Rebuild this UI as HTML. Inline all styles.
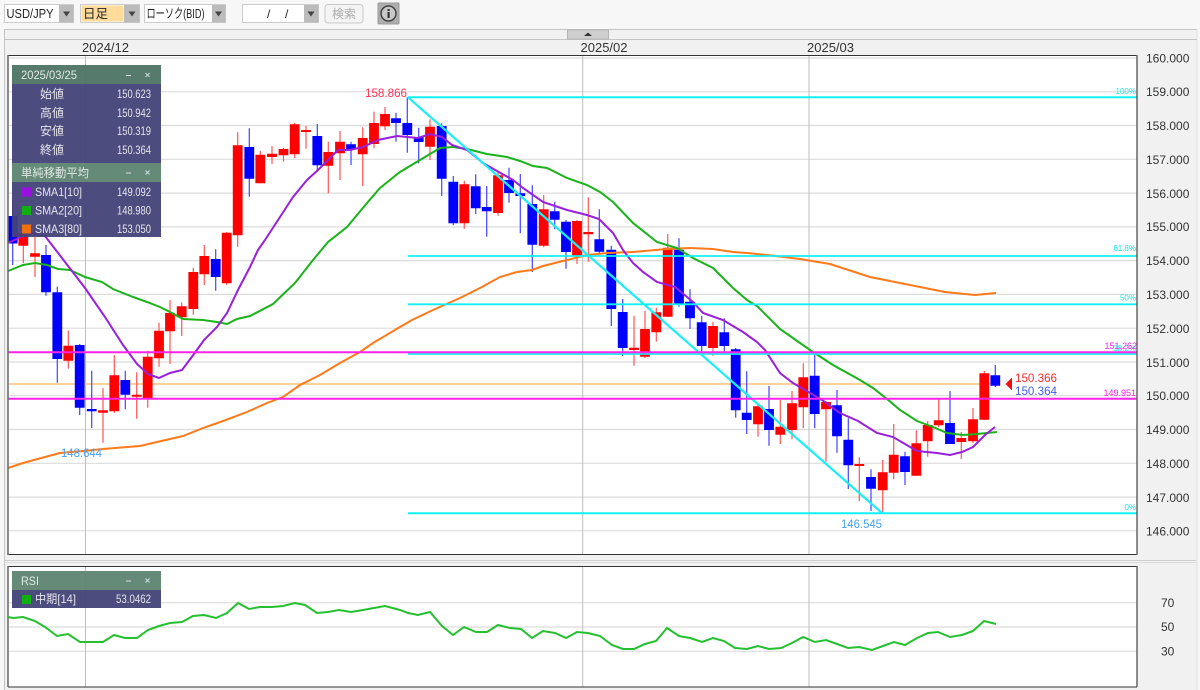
<!DOCTYPE html>
<html lang="ja"><head><meta charset="utf-8"><title>USD/JPY</title>
<style>
html,body{margin:0;padding:0;background:#f7f7f7;width:1200px;height:690px;overflow:hidden}
svg{display:block;filter:blur(.3px)}
text{font-family:"Liberation Sans","Noto Sans CJK JP",sans-serif;font-size:12px}
.ax{fill:#333}
.p{fill:#e4e4ea;font-size:12px}
.r{fill:#e4e4ea;font-size:12px;text-anchor:end}
.h{fill:#e0e8e4;font-size:12px}
.f{font-size:8px;text-anchor:end}
</style></head><body>
<svg width="1200" height="690" viewBox="0 0 1200 690" xmlns="http://www.w3.org/2000/svg">
<rect width="1200" height="690" fill="#f7f7f7"/>
<!-- outer frame -->
<rect x="4" y="29" width="1193" height="661" fill="#f1f1f1"/>
<path d="M4.500 690V29.500H1197" fill="none" stroke="#c4c4c4"/>
<path d="M1197 29V690" stroke="#e2e2e2"/>
<path d="M4 39.500H1197" stroke="#c4c4c4"/>
<rect x="567.500" y="30" width="41" height="9" fill="#cfcfcf" stroke="#b4b4b4"/>
<path d="M584 36H592L588 32.500Z" fill="#333"/>
<!-- separator -->
<rect x="5" y="560" width="1191" height="1" fill="#cfcfcf"/>
<rect x="5" y="562" width="1191" height="1" fill="#dcdcdc"/>
<!-- toolbar -->
<g>
<rect x="4.500" y="4.500" width="69" height="18" fill="#fff" stroke="#ccc"/>
<rect x="59" y="5" width="14.500" height="17.500" fill="#bbb"/>
<path d="M63 11.500H70L66.500 16.500Z" fill="#444"/>
<text x="6.500" y="18" fill="#222" textLength="47" lengthAdjust="spacingAndGlyphs" style="font-size:13px">USD/JPY</text>
<rect x="80.500" y="4.500" width="59" height="18" fill="#fff" stroke="#ccc"/>
<rect x="81.500" y="5.500" width="42" height="16" fill="#ffdc9a"/>
<rect x="124" y="5" width="15.500" height="17.500" fill="#bbb"/>
<path d="M128.500 11.500H135.500L132 16.500Z" fill="#444"/>
<text x="83" y="18" fill="#222" style="font-size:12.500px">日足</text>
<rect x="144.500" y="4.500" width="81" height="18" fill="#fff" stroke="#ccc"/>
<rect x="212" y="5" width="13.500" height="17.500" fill="#bbb"/>
<path d="M215 11.500H222L218.500 16.500Z" fill="#444"/>
<text x="146.500" y="18" fill="#222" textLength="58" lengthAdjust="spacingAndGlyphs" style="font-size:13px">ローソク(BID)</text>
<rect x="242.500" y="4.500" width="76" height="18" fill="#fff" stroke="#ccc"/>
<rect x="304" y="5" width="14.500" height="17.500" fill="#bbb"/>
<path d="M307.500 11.500H314.500L311 16.500Z" fill="#444"/>
<text x="267" y="18" fill="#222">/</text><text x="285" y="18" fill="#222">/</text>
<rect x="325" y="4.500" width="38" height="18.500" rx="3" fill="#f4f4f4" stroke="#c8c8c8"/>
<text x="332" y="18" fill="#aaa">検索</text>
<rect x="378" y="3" width="21" height="21" rx="1" fill="#aeaeae" stroke="#999"/>
<circle cx="388.500" cy="13.500" r="7.500" fill="#c8c8c8" stroke="#444" stroke-width="1.500"/>
<rect x="387.500" y="12" width="2.200" height="6" fill="#333"/><rect x="387.500" y="9" width="2.200" height="2" fill="#333"/>
</g>
<!-- date labels -->
<text x="82" y="52" class="ax" textLength="47" lengthAdjust="spacingAndGlyphs" style="font-size:13px">2024/12</text>
<text x="580.500" y="52" class="ax" textLength="47" lengthAdjust="spacingAndGlyphs" style="font-size:13px">2025/02</text>
<text x="807" y="52" class="ax" textLength="47" lengthAdjust="spacingAndGlyphs" style="font-size:13px">2025/03</text>
<!-- chart bg -->
<rect x="8" y="55" width="1129" height="500" fill="#fff"/>
<rect x="8" y="566" width="1129" height="121" fill="#fff"/>
<!-- grid -->
<path d="M8 58H1137M8 91.800H1137M8 125.500H1137M8 159.300H1137M8 193.100H1137M8 226.900H1137M8 260.600H1137M8 294.400H1137M8 328.200H1137M8 362H1137M8 395.700H1137M8 429.500H1137M8 463.300H1137M8 497.100H1137M8 530.800H1137" stroke="#dcdcdc" stroke-width="1.200" fill="none"/>
<path d="M8 602.700H1137M8 627H1137M8 651.300H1137" stroke="#dcdcdc" stroke-width="1.200" fill="none"/>
<path d="M85.500 55V555M582.700 55V555M809 55V555M85.500 566V687M582.700 566V687M809 566V687" stroke="#bdbdbd" fill="none"/>
<path d="M8 384H990" stroke="#fbc078" stroke-width="1.500"/>
<!-- wicks -->
<path fill="none" stroke="#f55" stroke-width="1.200" d="M23.300 228V263M35 235V277M68.300 330.700V368.700M103 388.300V442.700M114.300 355V413M136.700 372.300V418.700M147.700 350.700V407.700M159 322.700V366.700M170 300V364M181.700 302.300V336M193.300 267.700V314.700M204.300 245V285M226.700 232V285M237.700 132.300V246.700M260.300 151V183.300M272 146V164M283.500 148V161.700M294.700 122.700V158M306 126V148.700M328.300 141.700V193.300M340 131V180M362.700 127.300V186M374 111.700V148.300M385 107V130M430 119.300V160M464.300 180.700V228.700M498 171.700V215.700M543.700 195V247.300M577 220V264M588.300 197.300V261.700M634 315.700V365.700M645 310.700V358M656.300 307.700V341.700M667.700 234V317M713 321.700V355.700M758 403.300V436.700M780.300 400V444M792 391V439.300M803.300 363.300V428.300M826 401V461.700M859.300 457.300V501.300M882.700 460V512M893.700 424V479.300M916.300 430.300V476M927.700 421V456.700M938.700 399.300V427M961.300 432V459M973 408V443M984.300 370.700V420"/>
<path fill="none" stroke="#44f" stroke-width="1.200" d="M12.700 200V265M46 245V295.700M57.300 286.700V382.700M79.700 344V415M91.700 370.700V428M125.300 370.700V409.300M215.700 249.300V290.700M249.300 128.300V196.700M317.300 124V171.700M351 141.700V165M396 112.700V141.700M407.300 97.300V152.700M418.700 127.700V163.300M441.700 123.300V196M453.300 176V225.300M475.700 174.300V214M486.700 186V236.700M509 167.700V202.700M520.300 174V233.300M532.300 185.300V272M554.700 201.700V229.300M566 220V268.700M599.300 209.300V254.300M611.300 245.700V326M622.700 299V356M679 238.300V306.700M690 289.300V329M701.700 315.700V353.300M724.300 318.300V353.300M735.700 348V417.700M746.700 371.300V434M769 386V445.700M814.700 353.300V428.300M837 390V452.700M848.300 418.300V489M871 469.300V511M905 451.700V485M950 391V444M995.300 365V387"/>
<!-- bodies -->
<path fill="none" stroke="#f00" stroke-width="9.800" d="M23.300 233V245.700M35 253.300V256.700M68.300 345.700V360.700M103 410.300V412.700M114.300 375.300V411.300M136.700 394.700V396.700M147.700 356.700V398.300M159 330.700V358.300M170 313V331.300M181.700 306.300V317.300M193.300 272V309M204.300 256V274.300M226.700 232.700V283.300M237.700 145.300V235.300M260.300 154.700V183.300M272 153.700V157M283.500 149V155.300M294.700 124.300V154.300M306 130V132M328.300 152V165.700M340 141.700V153.300M362.700 138V154.300M374 123V144M385 114V126.300M430 126.700V146.700M464.300 184.300V223.300M498 175.300V213M543.700 209.300V245.700M577 221V256M588.300 232V234.300M634 347.700V350M645 329V356.700M656.300 312.300V332.300M667.700 247.700V316.700M713 326V348M758 406.300V424.300M780.300 426.700V434.700M792 403.300V430M803.300 377.300V407.300M826 402V409.300M859.300 464V466M882.700 472.300V490.300M893.700 454.700V472.700M916.300 443.300V475.700M927.700 425V441.300M938.700 420.300V425.300M961.300 438V442M973 419.300V441.300M984.300 373.300V419.700"/>
<path fill="none" stroke="#00f" stroke-width="9.800" d="M12.700 216V243.500M46 255V292.300M57.300 292.300V359M79.700 345V407.700M91.700 409V411.300M125.300 380V394.700M215.700 259V277M249.300 147V178.700M317.300 136V165.300M351 144.300V149M396 118.300V123M407.300 123V135M418.700 137.300V142M441.700 126V178.700M453.300 181.700V223.300M475.700 186.300V208.300M486.700 207V211.300M509 180V193M520.300 193.300V196M532.300 204V244.700M554.700 211.300V219.700M566 221.700V252M599.300 239.300V251.700M611.300 249.700V309M622.700 312V348M679 249.700V304M690 301.700V318.300M701.700 322.300V346M724.300 332.300V346M735.700 349.300V410.300M746.700 412.700V420M769 409V430M814.700 375.700V414M837 405.300V436.300M848.300 439.700V465.300M871 477V488.700M905 456.300V472M950 423V444M995.300 375.300V385.700"/>
<!-- SMA lines -->
<polyline fill="none" stroke="#ff7a1a" stroke-width="2" points="8,468 23,463 45,457 60,453 83,451 103,449 140,446 157,442 183,436 203,428 223,421 247,412 267,403 283,397 300,385 320,375 340,363 360,352 373,343 400,327 412,320 433,310 460,298 480,288 500,277 517,272 532,270 543,266 567,260 587,255 607,253 633,252 667,249 690,248 713,249 733,252 747,253 767,255 800,259 830,264 870,277 905,284 945,292 975,295 996,293"/>
<polyline fill="none" stroke="#1ab31a" stroke-width="2" points="8,271 23,265 35,263 47,265 58,269 70,270 85,277 102,282 113,289 133,297 147,302 160,307 170,312 183,319 203,320 217,322 227,324 237,319 250,316 273,304 295,283 313,260 328,242 347,227 367,203 380,188 400,172 420,160 440,148 453,147 467,149 487,154 507,157 520,161 533,166 547,168 567,178 587,185 600,192 613,202 633,223 657,242 677,248 693,258 713,268 733,288 747,300 757,306 780,329 800,343 813,352 833,365 860,380 873,388 887,399 900,410 917,421 933,427 947,433 963,435 977,434 997,432"/>
<polyline fill="none" stroke="#9a1fdc" stroke-width="2" points="8,243 23,236 33,233 45,236 85,288 105,317 123,345 137,364 148,374 159,378 170,373 182,370 194,354 204,340 217,327 227,313 238,290 250,267 258,250 265,240 280,217 293,197 307,180 318,170 328,160 338,150 350,150 363,147 378,140 397,136 418,138 430,134 442,137 452,145 467,150 483,163 497,171 513,180 523,188 543,202 567,210 587,215 599,219 613,233 623,250 633,263 643,272 657,282 675,287 693,302 703,313 723,320 743,332 757,342 765,350 780,373 793,383 810,393 822,400 840,413 858,421 877,433 893,437 917,451 937,453 950,455 962,452 973,447 985,435 995,427"/>
<!-- fib -->
<path d="M408 97.300L882 513" stroke="#1ceef5" stroke-width="2.200" fill="none"/>
<path d="M408 97.300H1137M408 513.300H1137" stroke="#12f0f5" stroke-width="2"/>
<path d="M408 256H1137M408 304.300H1137M408 354H1137" stroke="#12f0f5" stroke-width="1.800"/>
<path d="M8 352.300H1137M8 398.700H1137" stroke="#ff22e8" stroke-width="2"/>
<!-- border -->
<path d="M8 55.500H1137M8 554.500H1137" fill="none" stroke="#333" stroke-width="1"/>
<path d="M8 55V555M1137 55V555" stroke="#666" stroke-width="1.500"/>
<path d="M8 566.500H1137M8 687H1137" fill="none" stroke="#333" stroke-width="1"/>
<path d="M8 566V687M1137 566V687" stroke="#666" stroke-width="1.500"/>
<!-- fib labels -->
<text x="1136" y="94" class="f" fill="#12e8f0">100%</text>
<text x="1136" y="251" class="f" fill="#12e8f0">61.8%</text>
<text x="1136" y="300.500" class="f" fill="#12e8f0">50%</text>
<text x="1136" y="351" class="f" fill="#12e8f0">38.2%</text>
<text x="1136" y="510" class="f" fill="#12e8f0">0%</text>
<text x="1137" y="349" class="f" fill="#ff22e8" style="font-size:9px">151.262</text>
<text x="1136" y="396" class="f" fill="#ff22e8" style="font-size:9px">149.951</text>
<!-- value labels -->
<text x="365" y="97" fill="#ff3355" textLength="42" lengthAdjust="spacingAndGlyphs">158.866</text>
<text x="61" y="457" fill="#44a0f5" textLength="41" lengthAdjust="spacingAndGlyphs">148.644</text>
<text x="841" y="528" fill="#44a0f5" textLength="41" lengthAdjust="spacingAndGlyphs">146.545</text>
<path d="M1005.500 384L1012 377.500V390.500Z" fill="#f01010"/>
<text x="1015" y="382" fill="#f03030" textLength="42" lengthAdjust="spacingAndGlyphs">150.366</text>
<text x="1015" y="395" fill="#4060e8" textLength="42" lengthAdjust="spacingAndGlyphs">150.364</text>
<!-- axis labels -->
<svg x="1140" y="55.500" width="56" height="490" viewBox="1140 55.500 56 490">
<text x="1146" y="62.500" class="ax">160.000</text>
<text x="1146" y="96" class="ax">159.000</text>
<text x="1146" y="130" class="ax">158.000</text>
<text x="1146" y="164" class="ax">157.000</text>
<text x="1146" y="198" class="ax">156.000</text>
<text x="1146" y="231" class="ax">155.000</text>
<text x="1146" y="265" class="ax">154.000</text>
<text x="1146" y="299" class="ax">153.000</text>
<text x="1146" y="333" class="ax">152.000</text>
<text x="1146" y="367" class="ax">151.000</text>
<text x="1146" y="400" class="ax">150.000</text>
<text x="1146" y="434" class="ax">149.000</text>
<text x="1146" y="468" class="ax">148.000</text>
<text x="1146" y="502" class="ax">147.000</text>
<text x="1146" y="535.500" class="ax">146.000</text>
</svg>
<text x="1161" y="607" class="ax">70</text>
<text x="1161" y="631" class="ax">50</text>
<text x="1161" y="655.500" class="ax">30</text>
<!-- RSI line -->
<polyline fill="none" stroke="#25c030" stroke-width="2" points="8,617 13,618 23,617 35,621 45,627 57,636 68,634 80,642 103,642 114,635 125,638 137,638 148,630 159,626 170,623 182,622 193,616 204,615 216,618 227,613 238,603 249,609 260,607 272,607 283,606 295,603 305,605 317,613 328,612 339,610 351,612 363,610 374,608 385,606 400,610 408,613 418,615 430,612 442,626 453,635 464,627 476,632 487,632 498,625 510,628 521,629 532,638 543,631 555,633 566,638 577,632 588,633 600,636 612,645 623,649 634,649 645,644 656,641 667,628 679,636 690,638 702,642 713,638 724,641 735,648 747,649 758,646 769,649 781,648 792,643 803,637 815,642 826,640 837,644 848,648 859,647 872,650 883,646 894,642 905,645 917,638 928,633 938,632 950,637 962,635 973,631 984,621 996,624"/>
<!-- info panel -->
<rect x="12" y="65" width="149" height="19" fill="#4f7566" fill-opacity=".96"/>
<rect x="12" y="84" width="149" height="79" fill="#434278" fill-opacity=".95"/>
<rect x="12" y="163" width="149" height="19" fill="#5f8571" fill-opacity=".96"/>
<rect x="12" y="182" width="149" height="55" fill="#434278" fill-opacity=".95"/>
<text x="21" y="79" class="h" textLength="56" lengthAdjust="spacingAndGlyphs">2025/03/25</text>
<path d="M126 75.500H131" stroke="#dde" stroke-width="1"/>
<path d="M145.500 73L149.500 77M149.500 73L145.500 77" stroke="#cdd" stroke-width="1"/>
<text x="40" y="98" class="p">始値</text><text x="151" y="98" class="r" textLength="34" lengthAdjust="spacingAndGlyphs">150.623</text>
<text x="40" y="117" class="p">高値</text><text x="151" y="117" class="r" textLength="34" lengthAdjust="spacingAndGlyphs">150.942</text>
<text x="40" y="135" class="p">安値</text><text x="151" y="135" class="r" textLength="34" lengthAdjust="spacingAndGlyphs">150.319</text>
<text x="40" y="154" class="p">終値</text><text x="151" y="154" class="r" textLength="34" lengthAdjust="spacingAndGlyphs">150.364</text>
<text x="21" y="177" class="h" textLength="68" lengthAdjust="spacingAndGlyphs">単純移動平均</text>
<path d="M126 173H131" stroke="#dde" stroke-width="1"/>
<path d="M145.500 170.500L149.500 174.500M149.500 170.500L145.500 174.500" stroke="#cdd" stroke-width="1"/>
<rect x="22" y="187.500" width="9" height="9" fill="#9a10e0"/>
<text x="35" y="196" class="p" textLength="47" lengthAdjust="spacingAndGlyphs">SMA1[10]</text><text x="151" y="196" class="r" textLength="34" lengthAdjust="spacingAndGlyphs">149.092</text>
<rect x="22" y="206" width="9" height="9" fill="#10b010"/>
<text x="35" y="214.500" class="p" textLength="47" lengthAdjust="spacingAndGlyphs">SMA2[20]</text><text x="151" y="214.500" class="r" textLength="34" lengthAdjust="spacingAndGlyphs">148.980</text>
<rect x="22" y="224.500" width="9" height="9" fill="#f07010"/>
<text x="35" y="233" class="p" textLength="47" lengthAdjust="spacingAndGlyphs">SMA3[80]</text><text x="151" y="233" class="r" textLength="34" lengthAdjust="spacingAndGlyphs">153.050</text>
<!-- RSI panel -->
<rect x="12" y="571" width="149" height="19" fill="#5f8571" fill-opacity=".96"/>
<rect x="12" y="590" width="149" height="18" fill="#434278" fill-opacity=".95"/>
<text x="21" y="585" class="h" textLength="18" lengthAdjust="spacingAndGlyphs">RSI</text>
<path d="M126 581H131" stroke="#dde" stroke-width="1"/>
<path d="M145.500 578.500L149.500 582.500M149.500 578.500L145.500 582.500" stroke="#cdd" stroke-width="1"/>
<rect x="22" y="595" width="9" height="9" fill="#10b010"/>
<text x="35" y="603" class="p" textLength="41" lengthAdjust="spacingAndGlyphs">中期[14]</text>
<text x="151" y="603" class="r" textLength="35" lengthAdjust="spacingAndGlyphs">53.0462</text>
</svg>
</body></html>
